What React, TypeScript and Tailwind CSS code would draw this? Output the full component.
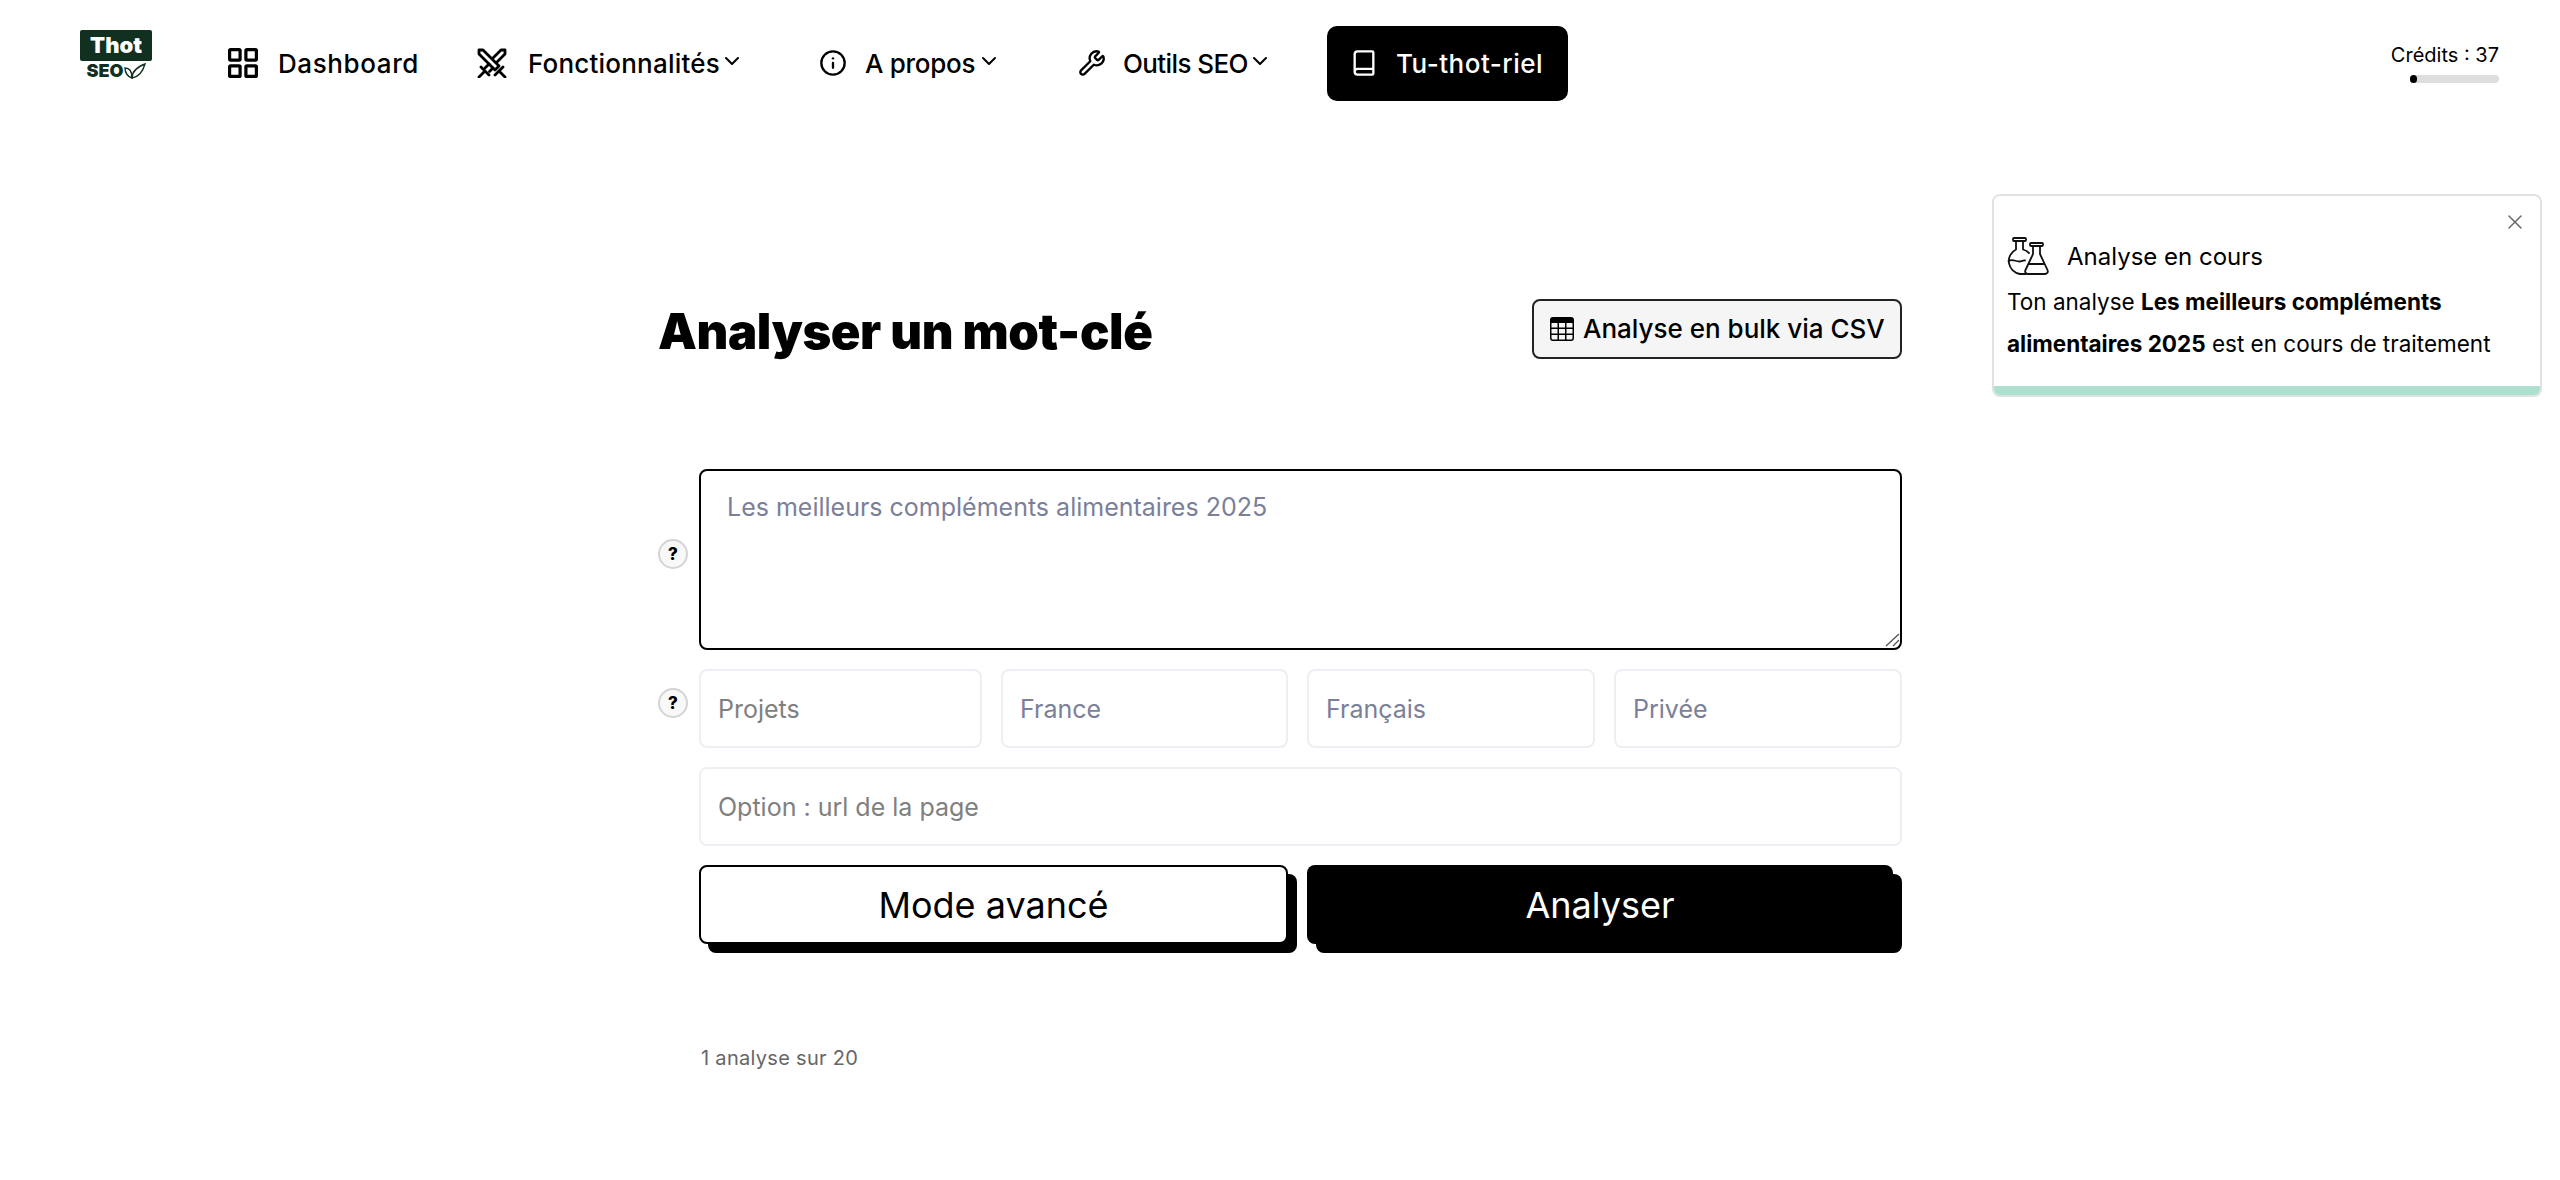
import { Book, ChevronDown, Info, Wrench, X } from "lucide-react";
import { BsTable } from "react-icons/bs";

const font = "font-['Inter','Liberation_Sans',sans-serif]";

function Logo() {
  return (
    <div className="w-[72px] shrink-0 flex flex-col items-center -mt-[17px]">
      <div className="w-full h-[31px] bg-[#12301f] rounded-[2px] flex items-center justify-center text-white text-[22px] font-black leading-none">
        Thot
      </div>
      <div className="mt-[2px] ml-[2px] flex items-center h-[17px] text-[#12301f] text-[18px] font-black leading-none">
        <span>SEO</span>
        <svg width="24" height="17" viewBox="0 0 22 17" fill="none" stroke="#12301f" strokeWidth="1.4">
          <path d="M1 5c4 0 7 3 7 10C4 14 1 10 1 5Z" />
          <path d="M8 15c0-6 5-11 13-14-2 7-6 13-13 14Z" />
        </svg>
      </div>
    </div>
  );
}

function GridIcon() {
  return (
    <svg width="30" height="30" viewBox="0 0 30 30" fill="none" stroke="#000" strokeWidth="3.2" className="shrink-0">
      <rect x="1.6" y="1.6" width="10.5" height="10.5" rx="1" />
      <rect x="17.9" y="1.6" width="10.5" height="10.5" rx="1" />
      <rect x="1.6" y="17.9" width="10.5" height="10.5" rx="1" />
      <rect x="17.9" y="17.9" width="10.5" height="10.5" rx="1" />
    </svg>
  );
}

function SwordsIcon() {
  return (
    <svg width="30" height="30" viewBox="0 0 30 30" fill="none" stroke="#000" strokeWidth="2.8" strokeLinejoin="round" strokeLinecap="round" className="shrink-0">
      <path d="M2 2h4l16 16-4 4L2 6Z" />
      <path d="M28 2h-4l-8 8M28 2v4l-8 8" />
      <path d="M12 16l-4 4M16 20l-3.5 3.5" />
      <path d="M4 19l8 8M8 23l-6 6" />
      <path d="M26 19l-8 8M22 23l6 6" />
    </svg>
  );
}

function NavLabel({ label, width, chevron = true }: { label: string; width: string; chevron?: boolean }) {
  return (
    <>
      <span className={`${width} mt-[2px] whitespace-nowrap text-[26px] font-medium leading-none`}>{label}</span>
      {chevron && <ChevronDown className="w-[24px] h-[24px] -mt-[4px] -ml-[1px] -mr-[3px]" strokeWidth={2} />}
    </>
  );
}

function FlaskIcon() {
  return (
    <svg width="43" height="38" viewBox="0 0 43 38" fill="none" stroke="#111" strokeWidth="1.8" strokeLinejoin="round" strokeLinecap="round" className="shrink-0">
      <rect x="6" y="1" width="13" height="3" rx="1" />
      <path d="M9 4v8.5A13 13 0 0 0 13 37h6" />
      <path d="M16 4v8.5c2.500.8 4.500 2 6 3.500" />
      <path d="M1.500 24c4-2.500 7 .5 10.500.5s3.500-1.500 6-1" />
      <rect x="23" y="6" width="13" height="3" rx="1" />
      <path d="M26 9v8L18.500 33c-1 2.200.5 4 2.500 4h17c2 0 3.500-1.800 2.500-4L33 17V9" />
      <path d="M22.500 27h14" />
    </svg>
  );
}

function Help() {
  return (
    <div className="w-[30px] h-[30px] shrink-0 rounded-full border-2 border-[#d4d4d4] bg-[#f8f8f8] flex items-center justify-center text-[17px] font-extrabold leading-none">
      ?
    </div>
  );
}

function Field({ placeholder, className = "", grey = false }: { placeholder: string; className?: string; grey?: boolean }) {
  return (
    <input
      placeholder={placeholder}
      className={`h-[79px] min-w-0 rounded-[8px] border-2 border-[#eeeef4] bg-white px-[17px] text-[25px] outline-none ${
        grey ? "placeholder:text-[#808080]" : "placeholder:text-[#7b7f99]"
      } ${className}`}
    />
  );
}

export default function App() {
  return (
    <div className={`${font} relative min-h-[1180px] bg-white text-black overflow-hidden`}>
      {/* Top nav */}
      <header className="h-[126px] pl-[80px] pr-[61px] flex items-center">
        <Logo />
        <nav className="flex items-center ml-[76px]">
          <a className="flex items-center">
            <GridIcon />
            <span className="ml-[20px] flex items-center tracking-[0.6px]">
              <NavLabel label="Dashboard" width="w-[139px]" chevron={false} />
            </span>
          </a>
          <a className="flex items-center ml-[60px]">
            <SwordsIcon />
            <span className="ml-[21px] flex items-center tracking-[0.2px]">
              <NavLabel label="Fonctionnalités" width="w-[193px]" />
            </span>
          </a>
          <a className="flex items-center ml-[78px]">
            <Info className="w-[28px] h-[28px] shrink-0" strokeWidth={2} />
            <span className="ml-[18px] flex items-center -tracking-[0.3px]">
              <NavLabel label="A propos" width="w-[113px]" />
            </span>
          </a>
          <a className="flex items-center ml-[80px]">
            <Wrench className="w-[28px] h-[28px] shrink-0" strokeWidth={2} />
            <span className="ml-[17px] flex items-center -tracking-[0.6px]">
              <NavLabel label="Outils SEO" width="w-[126px]" />
            </span>
          </a>
          <a className="flex items-center ml-[58px] h-[75px] w-[241px] rounded-[10px] bg-black text-white pl-[23px]">
            <Book className="w-[28px] h-[28px] shrink-0" strokeWidth={2} />
            <span className="ml-[18px] flex items-center tracking-[0.5px]">
              <NavLabel label="Tu-thot-riel" width="w-[147px]" chevron={false} />
            </span>
          </a>
        </nav>
        <div className="ml-auto w-[107px] flex flex-col items-end">
          <span className="mt-[2px] text-[20px] leading-none whitespace-nowrap">Crédits : 37</span>
          <div className="mt-[10px] w-[89px] h-[8px] rounded-full bg-[#dedede]">
            <div className="w-[7px] h-[8px] rounded-full bg-black" />
          </div>
        </div>
      </header>

      {/* Main form */}
      <main className="mx-auto w-[1244px] pt-[173px]">
        <div className="flex items-center justify-between h-[60px]">
          <h1 className="mt-[4px] text-[49px] font-black leading-none tracking-[-0.4px]">Analyser un mot-clé</h1>
          <button className="h-[60px] w-[370px] rounded-[8px] border-2 border-[#222] bg-[#f5f5f5] flex items-center pl-[16px] text-[26px] font-medium whitespace-nowrap">
            <BsTable className="w-[24px] h-[24px] shrink-0" />
            <span className="ml-[9px] -mt-[2px]">Analyse en bulk via CSV</span>
          </button>
        </div>

        <div className="mt-[110px] flex gap-[11px]">
          <div className="pt-[70px]">
            <Help />
          </div>
          <div className="relative w-[1203px] h-[181px]">
            <textarea
              placeholder="Les meilleurs compléments alimentaires 2025"
              className="block w-full h-full resize-none rounded-[8px] border-2 border-black px-[26px] pt-[18px] text-[25px] leading-[36px] outline-none placeholder:text-[#7b7f99]"
            />
            {/* resize grip */}
            <svg width="15" height="14" viewBox="0 0 15 14" fill="none" stroke="#555" strokeWidth="1.3" className="absolute right-[2px] bottom-[3px] pointer-events-none">
              <path d="M1 13 14 1M8 13l6-6" />
            </svg>
          </div>
        </div>

        <div className="mt-[19px] flex gap-[11px]">
          <div className="pt-[19px]">
            <Help />
          </div>
          <div className="w-[1203px] flex flex-col gap-[19px]">
            <div className="flex gap-[19px]">
              <Field placeholder="Projets" className="w-[283px]" grey />
              <Field placeholder="France" className="w-[287px]" />
              <Field placeholder="Français" className="w-[288px]" />
              <Field placeholder="Privée" className="w-[288px]" />
            </div>
            <Field placeholder="Option : url de la page" className="w-full" grey />
            <div className="flex gap-[19px]">
              <button className="w-[589px] h-[79px] rounded-[8px] border-2 border-black bg-white text-[36px] shadow-[9px_9px_0_#000]">
                Mode avancé
              </button>
              <button className="w-[586px] h-[79px] rounded-[8px] bg-black text-white text-[36px] shadow-[9px_9px_0_#000]">
                Analyser
              </button>
            </div>
          </div>
        </div>

        <p className="mt-[104px] ml-[43px] text-[20px] leading-none tracking-[0.3px] text-[#666]">1 analyse sur 20</p>
      </main>

      {/* Toast */}
      <div className="absolute left-[1992px] top-[194px] w-[550px] h-[203px] rounded-[8px] border-2 border-[#dfe3e1] bg-white overflow-hidden">
        <X className="absolute right-[13px] top-[14px] w-[24px] h-[24px] text-[#666]" strokeWidth={1.5} />
        <div className="pl-[13px] pt-[41px] flex items-center">
          <FlaskIcon />
          <span className="ml-[17px] mt-[2px] text-[24px] leading-none">Analyse en cours</span>
        </div>
        <p className="pl-[13px] mt-[6px] text-[22.5px] leading-[42px] whitespace-nowrap">
          Ton analyse <strong className="font-bold">Les meilleurs compléments</strong>
          <br />
          <strong className="font-bold">alimentaires 2025</strong> est en cours de traitement
        </p>
        <div className="absolute left-0 right-0 bottom-0 h-[9px] bg-[#aee0cf]" />
      </div>
    </div>
  );
}
